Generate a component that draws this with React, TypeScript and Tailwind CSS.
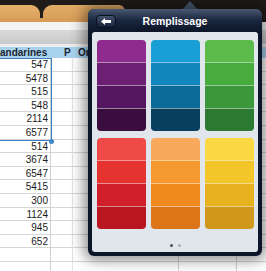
import React from "react";

const numbers = ["547", "5478", "515", "548", "2114", "6577", "514", "3674", "6547", "5415", "300", "1124", "945", "652", "", ""];

const swatches: string[][] = [
  ["#8f2a8e", "#6d1f74", "#551762", "#3a0d3e"],
  ["#199fd6", "#1286bf", "#0c6b98", "#083e5e"],
  ["#5bbb4b", "#47ab3e", "#3a983a", "#2c7a31"],
  ["#ef4a47", "#e5332f", "#d11f29", "#b9161f"],
  ["#f8a95b", "#f5992f", "#f08a1f", "#dc7418"],
  ["#fbd744", "#f2c629", "#e6b21d", "#d0981a"],
];

function Swatch({ colors }: { colors: string[] }) {
  return (
    <div className="flex h-[91px] flex-col overflow-hidden rounded-[4px]">
      {colors.map((c, i) => (
        <div
          key={i}
          className={i === 0 ? "flex-1" : "flex-1 border-t border-white/50"}
          style={{ backgroundColor: c }}
        />
      ))}
    </div>
  );
}

export default function App() {
  return (
    <div className="relative h-[271px] w-[266px] overflow-hidden bg-white font-['Liberation_Sans',Arial,sans-serif]">
      {/* top dark bar + tabs */}
      <div className="flex h-[22px] flex-col bg-[#1f1b18]">
        <div className="h-[5px]" />
        <div className="flex w-[125px] flex-1 flex-col">
          <div className="flex flex-1">
            <div className="w-[40px] rounded-tr-[9px] bg-gradient-to-b from-[#e6b06a] to-[#dca35d]" />
            <div className="w-[3px]" />
            <div className="flex-1 rounded-tl-[9px] rounded-tr-[6px] bg-gradient-to-b from-[#e2ab66] to-[#d9a05b]" />
          </div>
          <div className="h-[4px] bg-[#d79d58]" />
        </div>
      </div>
      {/* toolbar bands */}
      <div className="h-[8px] bg-[#f4f4f4]" />
      <div className="h-[14px] bg-gradient-to-b from-[#d9d9d9] to-[#c9c9c9]" />
      <div className="h-[3px] bg-[#ededed]" />
      {/* header row */}
      <div className="grid h-[11px] grid-cols-[51px_22px_106px_58px_1fr] bg-[#a8d3ef] text-[10px] font-bold leading-[11px] text-[#1b2330]">
        <div className="overflow-hidden whitespace-nowrap">andarines</div>
        <div className="pl-[13px]">P</div>
        <div className="pl-[5px]">Or</div>
        <div />
        <div />
      </div>
      {/* rows */}
      <div className="relative">
        {numbers.map((n, i) => (
          <div
            key={i}
            className="grid h-[13.6px] grid-cols-[51px_22px_106px_58px_1fr] border-b border-[#d6d6d6] text-[10px] leading-[13px] text-[#1a1a1a]"
          >
            <div className="border-r border-[#cfcfcf] pr-[2px] text-right">{n}</div>
            <div className="border-r border-[#e2e2e2]" />
            <div className="border-r border-[#cfcfcf]" />
            <div className="border-r border-[#cfcfcf]" />
            <div />
          </div>
        ))}
        {/* selection */}
        <div className="absolute left-0 top-0 h-[83px] w-[52px] border-b-[1.5px] border-r-[1.5px] border-t-[1.5px] border-[#3f7fbd]" />
        <div className="absolute left-[49px] top-[80.5px] h-[5px] w-[5px] rounded-full bg-[#3f86c8]" />
      </div>

      {/* popover arrow */}
      <div className="absolute left-[182px] top-[1px] h-0 w-0 border-b-[9px] border-l-[8px] border-r-[8px] border-b-[#4a5873] border-l-transparent border-r-transparent" />
      {/* popover */}
      <div className="absolute left-[88px] top-[9px] flex h-[247px] w-[174px] flex-col rounded-[6px] bg-[#0d1629] shadow-[0_0_14px_4px_rgba(0,0,0,0.45)]">
        <div className="relative flex h-[23px] items-center justify-center rounded-t-[6px] bg-gradient-to-b from-[#4a5873] via-[#1a263e] to-[#0d1629]">
          <div className="absolute left-[8px] top-[6px] flex h-[13px] w-[20px] items-center justify-center rounded-[4px] border border-[#08101f] bg-gradient-to-b from-[#465470] to-[#17223a]">
            <svg width="10" height="7" viewBox="0 0 10 7">
              <polygon points="0,3.5 4,0 4,2 10,2 10,5 4,5 4,7" fill="#ffffff" />
            </svg>
          </div>
          <span className="pt-[3px] text-[10.5px] font-bold text-white">Remplissage</span>
        </div>
        <div className="mx-[4px] mb-[4px] flex flex-1 flex-col rounded-[3px] bg-[#e1e5ec] pl-[5px] pr-[4px] pt-[8px]">
          <div className="grid grid-cols-3 gap-x-[5px] gap-y-[7px]">
            {swatches.map((s, i) => (
              <Swatch key={i} colors={s} />
            ))}
          </div>
          <div className="mt-[15px] flex justify-center gap-[5px] pr-[1px]">
            <div className="h-[3px] w-[3px] rounded-full bg-[#4b505b]" />
            <div className="h-[3px] w-[3px] rounded-full bg-[#a9aeb8]" />
          </div>
        </div>
      </div>
    </div>
  );
}
